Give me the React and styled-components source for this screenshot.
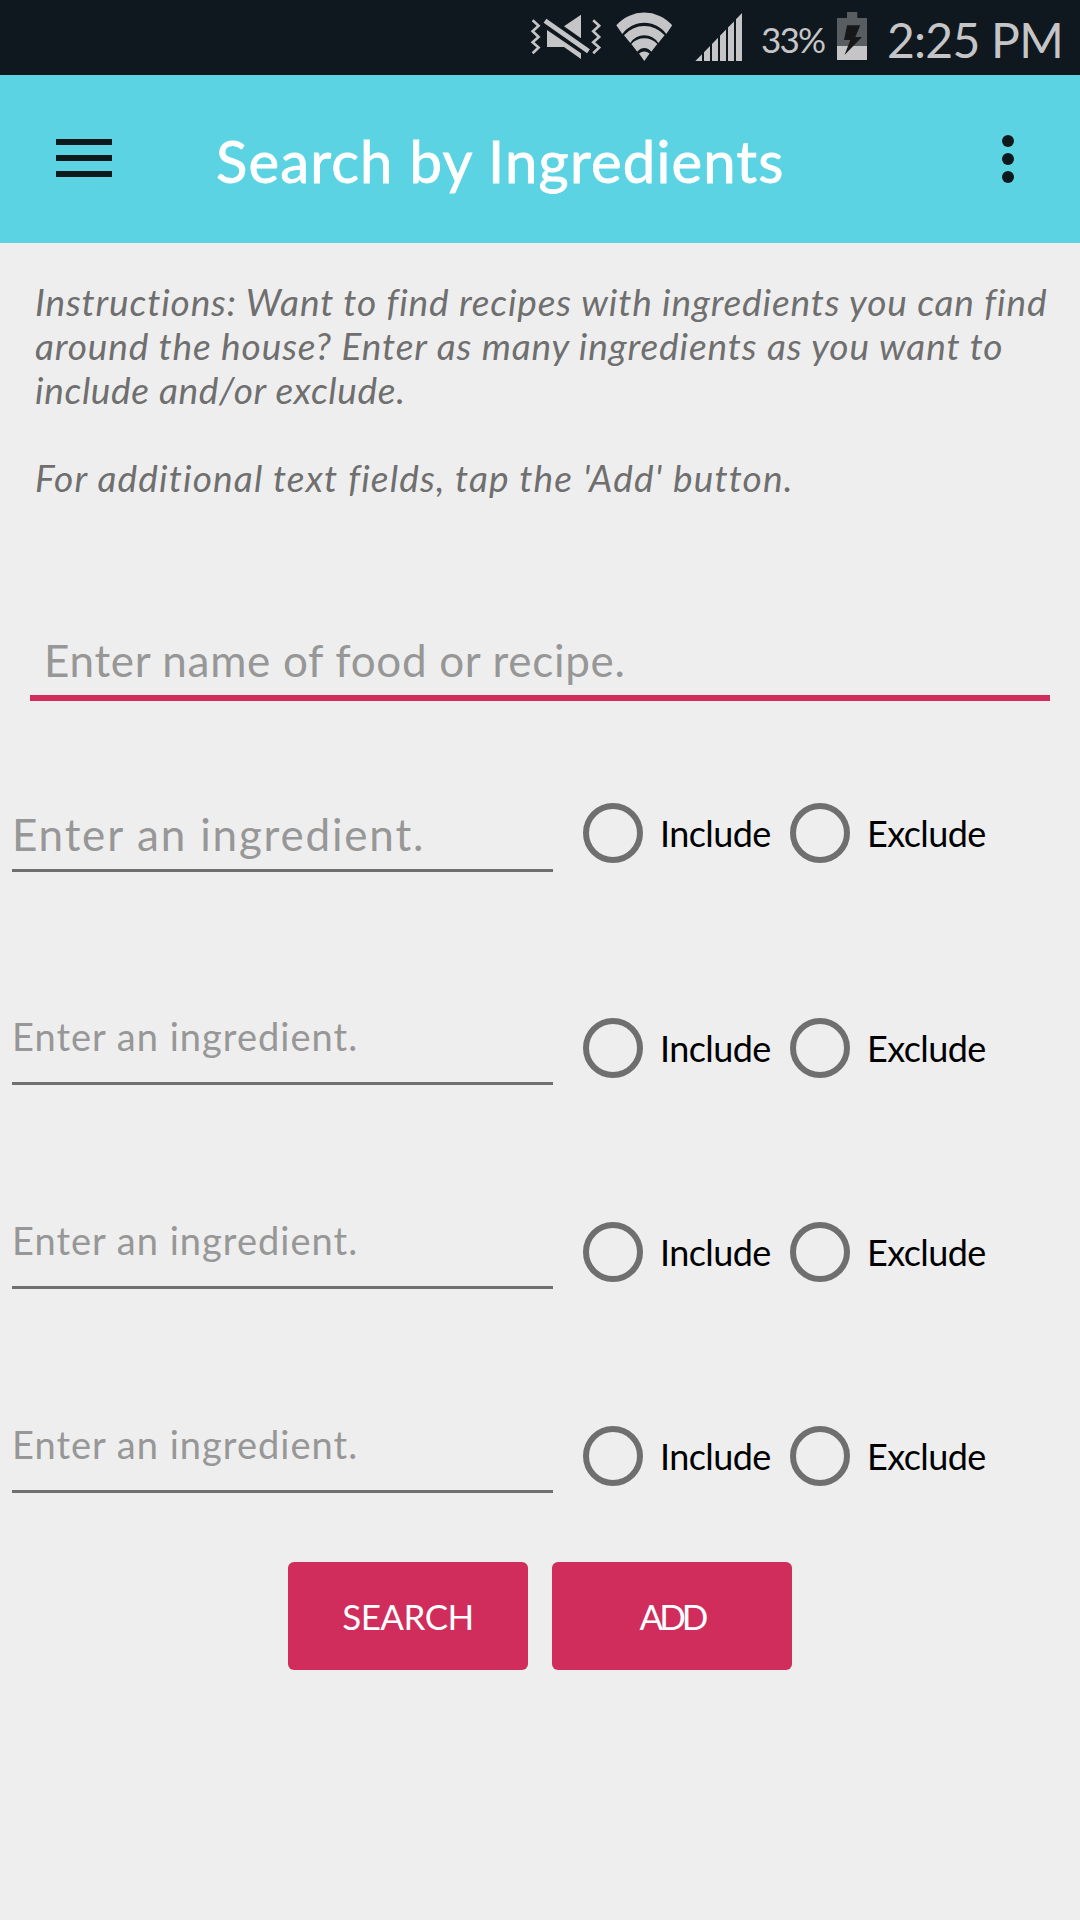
import React from "react";
import styled, { createGlobalStyle } from "styled-components";

const GlobalStyle = createGlobalStyle`
  * { box-sizing: border-box; }
  body { margin: 0; background: #eeeeee; font-family: Lato, "Open Sans", sans-serif; }
  button { font: inherit; border: 0; background: none; padding: 0; }
`;

const Screen = styled.div`
  width: 1080px;
  height: 1920px;
  display: flex;
  flex-direction: column;
  overflow: hidden;
  background: #eeeeee;
  white-space: nowrap;
`;

const StatusBar = styled.header`
  flex: none;
  height: 75px;
  display: flex;
  align-items: center;
  padding-left: 528px;
  background: #10181f;
  color: #c5c5c7;
`;

const StatusIcon = styled.svg`
  flex: none;
  display: block;
  width: ${(p) => p.$width}px;
  height: 75px;
  margin-left: ${(p) => p.$gap || 0}px;
`;

const BatteryLevel = styled.span`
  width: 76px;
  margin-left: 18px;
  padding-top: 2px;
  font-size: 35px;
  letter-spacing: -1.8px;
`;

const Clock = styled.time`
  margin-left: 20px;
  padding-top: 3px;
  font-size: 48px;
  letter-spacing: -0.75px;
`;

const AppBar = styled.nav`
  flex: none;
  height: 168px;
  display: flex;
  align-items: center;
  padding: 0 66px 0 56px;
  background: #5bd3e3;
`;

const MenuButton = styled.button`
  width: 56px;
  height: 38px;
  margin-top: -2px;
  display: flex;
  flex-direction: column;
  justify-content: space-between;
`;

const MenuBar = styled.span`
  height: 6px;
  background: #0c1a1d;
`;

const Title = styled.h1`
  flex: 1;
  margin: 0 0 0 104px;
  padding-top: 3px;
  font-size: 58px;
  font-weight: 400;
  letter-spacing: 1.15px;
  color: #ffffff;
  -webkit-text-stroke: 0.8px #ffffff;
`;

const OverflowButton = styled.button`
  width: 12px;
  height: 48px;
  display: flex;
  flex-direction: column;
  justify-content: space-between;
`;

const Dot = styled.span`
  height: 12px;
  border-radius: 50%;
  background: #0c1a1d;
`;

const Instructions = styled.p`
  flex: none;
  margin: 37px 0 0;
  padding-left: 35px;
  font-size: 37px;
  font-style: italic;
  line-height: 44px;
  color: #6f6f6f;
`;

const Line = styled.span`
  display: block;
  min-height: 44px;
  letter-spacing: ${(p) => p.$tracking || 0}px;
`;

const RecipeField = styled.div`
  flex: none;
  height: 69px;
  margin: 132px 30px 0;
  padding-left: 14px;
  border-bottom: 6px solid #d02c5c;
  font-size: 44px;
  line-height: 56px;
  letter-spacing: 0.68px;
  color: #979797;
`;

const Rows = styled.section`
  flex: none;
  padding: 80px 0 0 12px;
`;

const Row = styled.div`
  height: 100px;
  display: flex;
  align-items: flex-start;
  & + & { margin-top: 104px; }
  &:first-child { margin-bottom: 115px; }
  &:first-child + & { margin-top: 0; }
`;

const IngredientField = styled.div`
  width: 541px;
  height: ${(p) => (p.$large ? 66 : 77)}px;
  margin-top: ${(p) => (p.$large ? 25 : 12)}px;
  border-bottom: 3px solid #6f6f6f;
  font-size: ${(p) => (p.$large ? 44 : 38)}px;
  line-height: 56px;
  letter-spacing: ${(p) => (p.$large ? 1.8 : 1.02)}px;
  color: #979797;
`;

const Choices = styled.div`
  display: grid;
  grid-template-columns: 207px 207px;
  margin: 22px 0 0 30px;
`;

const Choice = styled.label`
  display: flex;
  align-items: center;
  gap: 17px;
  font-size: 36px;
  letter-spacing: -0.6px;
  color: #000000;
`;

const Radio = styled.span`
  width: 60px;
  height: 60px;
  border: 6px solid #6f6f6f;
  border-radius: 50%;
`;

const Actions = styled.div`
  flex: none;
  display: flex;
  justify-content: center;
  gap: 24px;
  margin-top: 58px;
`;

const ActionButton = styled.button`
  width: 240px;
  height: 108px;
  border-radius: 6px;
  background: #d02c5c;
  && { font-size: 35px; }
  letter-spacing: ${(p) => p.$tracking}px;
  color: #ffffff;
`;

function MuteIcon() {
  return (
    <StatusIcon $width={76} viewBox="528 0 76 75">
      <g fill="none" stroke="#c5c5c7" strokeWidth="2.6">
        <path d="M532.6 20.3 538.6 25.7 532.6 31.3 538.6 37 532.6 42.3 538.6 47.5 532.6 53.2" />
        <path d="M593.2 20.3 599.2 25.7 593.2 31.3 599.2 37 593.2 42.3 599.2 47.5 593.2 53.2" />
        <path d="M545 20.8 588.5 51.3" strokeWidth="4.8" />
      </g>
      <path fill="#c5c5c7" d="M581 14.7V38.3L564 26.3ZM547 30V47H564L581 58.9V53.3Z" />
    </StatusIcon>
  );
}

function WifiIcon() {
  return (
    <StatusIcon $width={64} $gap={8} viewBox="612 0 64 75" fill="#c5c5c7">
      <path d="M616.3 25.3A37 37 0 0 1 672.2 25.3L666.3 34A27 27 0 0 0 622.3 34Z" />
      <path d="M624 35.2A27 27 0 0 1 664.6 35.2L658.3 42.9A16.5 16.5 0 0 0 630.3 42.9Z" />
      <path d="M631.3 43.9A18 18 0 0 1 657.3 43.9L651.3 51.8A8.5 8.5 0 0 0 637.3 51.8Z" />
      <path d="M639 53.5A9 9 0 0 1 649.6 53.5L644.3 61Z" />
    </StatusIcon>
  );
}

function SignalIcon() {
  return (
    <StatusIcon $width={52} $gap={15} viewBox="691 0 52 75" fill="#c5c5c7">
      <path d="M695.3 61 702 54.3V61ZM704 61V52.2L710 46V61ZM712 61V44L718 37.8V61ZM720 61V35.8L726 29.6V61ZM728 61V27.6L734 21.4V61ZM736 61V19.3L742 13V61Z" />
    </StatusIcon>
  );
}

function BatteryIcon() {
  return (
    <StatusIcon $width={30} viewBox="837 0 30 75">
      <path fill="#585d61" d="M847 12H857.3V18H867V46H837V18H847Z" />
      <path fill="#c5c5c7" d="M837 46H867V60H837Z" />
      <path fill="#181818" d="M847 25.3H860.3L855.3 37H862L844.5 55 850.3 40H844Z" />
    </StatusIcon>
  );
}

const instructionLines = [
  { text: "Instructions: Want to find recipes with ingredients you can find", tracking: 0.86 },
  { text: "around the house? Enter as many ingredients as you want to", tracking: 0.89 },
  { text: "include and/or exclude.", tracking: 0.65 },
  { text: "", tracking: 0 },
  { text: "For additional text fields, tap the 'Add' button.", tracking: 1.17 },
];

const ingredientRows = [{ large: true }, { large: false }, { large: false }, { large: false }];

export default function App() {
  return (
    <>
      <GlobalStyle />
      <Screen>
        <StatusBar>
          <MuteIcon />
          <WifiIcon />
          <SignalIcon />
          <BatteryLevel>33%</BatteryLevel>
          <BatteryIcon />
          <Clock>2:25 PM</Clock>
        </StatusBar>
        <AppBar>
          <MenuButton aria-label="Menu">
            <MenuBar />
            <MenuBar />
            <MenuBar />
          </MenuButton>
          <Title>Search by Ingredients</Title>
          <OverflowButton aria-label="More">
            <Dot />
            <Dot />
            <Dot />
          </OverflowButton>
        </AppBar>
        <Instructions>
          {instructionLines.map((line, i) => (
            <Line key={i} $tracking={line.tracking}>{line.text}</Line>
          ))}
        </Instructions>
        <RecipeField>Enter name of food or recipe.</RecipeField>
        <Rows>
          {ingredientRows.map((row, i) => (
            <Row key={i}>
              <IngredientField $large={row.large}>Enter an ingredient.</IngredientField>
              <Choices>
                <Choice><Radio />Include</Choice>
                <Choice><Radio />Exclude</Choice>
              </Choices>
            </Row>
          ))}
        </Rows>
        <Actions>
          <ActionButton $tracking={-0.5}>SEARCH</ActionButton>
          <ActionButton $tracking={-4}>ADD</ActionButton>
        </Actions>
      </Screen>
    </>
  );
}
